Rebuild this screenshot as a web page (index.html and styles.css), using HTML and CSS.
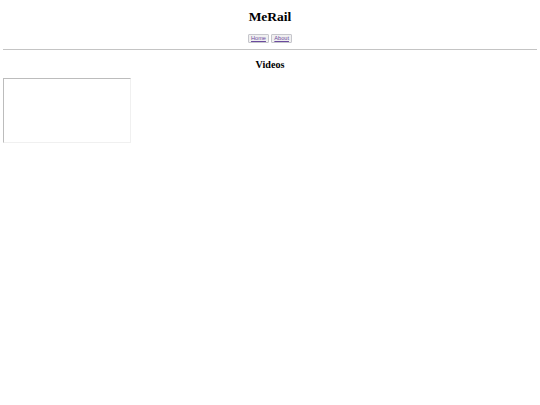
FILE: index.html
```html
<!DOCTYPE html>
<html lang="en">
<head>
<meta charset="utf-8">
<title>MeRail</title>
<link rel="stylesheet" href="styles.css">
</head>
<body>
<h1 class="site-title">MeRail</h1>
<nav class="site-nav">
  <button class="nav-btn"><a href="#" class="nav-link">Home</a></button>
  <button class="nav-btn"><a href="#" class="nav-link">About</a></button>
</nav>
<hr class="divider">
<h2 class="section-title">Videos</h2>
<div class="video-list">
  <div class="video-frame"></div>
</div>
</body>
</html>
```
FILE: styles.css
```css
html, body {
  background: #ffffff;
}
body {
  margin: 3.375px;
  font-family: "Liberation Serif", "Times New Roman", serif;
  color: #000;
}
.site-title {
  font-size: 13.5px;
  line-height: 15.5px;
  margin: 5.7px 0 9.05px;
  text-align: center;
  font-weight: bold;
}
.site-nav {
  display: flex;
  justify-content: center;
  gap: 1.4px;
  margin: 6.75px 0;
  height: 9px;
}
.nav-btn {
  font-family: "Liberation Sans", Arial, sans-serif;
  font-size: 5.6px;
  line-height: 6.4px;
  padding: 0.6px 2.5px;
  margin: 0;
  background: #f0f0f0;
  border: 1px solid #c6c6cc;
  border-radius: 1px;
  height: 9px;
}
.nav-link {
  color: #6a4a9e;
  text-decoration: underline;
}
.divider {
  margin: 3.375px 0;
  border: 0;
  border-top: 1px solid #c4c4c4;
  height: 0;
}
.section-title {
  font-size: 10.125px;
  line-height: 11.6px;
  margin: 8.4px 0 7.6px;
  text-align: center;
  font-weight: bold;
}
.video-list {
  display: flex;
}
.video-frame {
  width: 126px;
  height: 63px;
  border-style: solid;
  border-width: 1px;
  border-color: #bcbcbc #f0f0f0 #f0f0f0 #bcbcbc;
}
```
